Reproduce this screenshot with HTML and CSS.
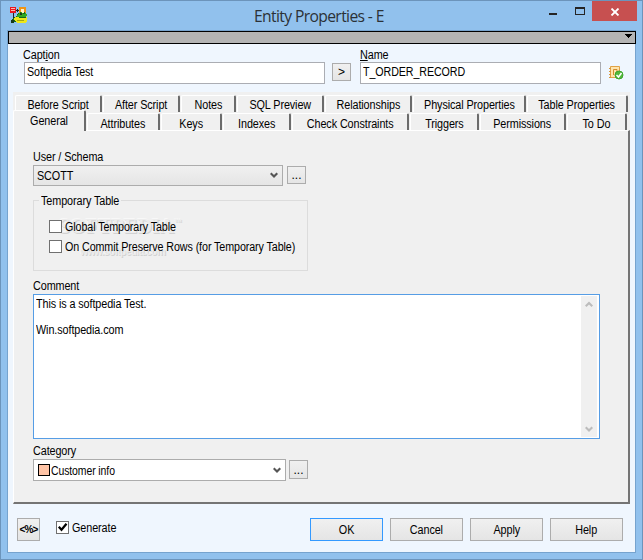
FILE: index.html
```
<!DOCTYPE html>
<html lang="en">
<head>
<meta charset="utf-8">
<title>Entity Properties - E</title>
<link rel="stylesheet" href="styles.css">
</head>
<body>
<div class="window">
  <header class="titlebar">
    <svg class="app-icon" width="17" height="17" viewBox="0 0 17 17" shape-rendering="crispEdges">
      <path d="M9 0h7v7H9z" fill="#ef9414"/><path d="M11 2h3v4h-3z" fill="#fff0c8"/>
      <path d="M0 0h6v6H0z" fill="#e81820"/><path d="M1 1h4v1H1zM1 3h4v1H1z" fill="#ffb8b0"/>
      <path d="M6 3h3v1H6zM7 2h1v3H7zM3 6h1v7H3z" fill="#222"/>
      <path d="M2 12l3-2 2-1 1-3 3-1 2 1 2-1 1 3 1 3-1 4H4z" fill="#126b18"/>
      <path d="M6 9l3-3 3-1 1 2 3-1 1 2-2 2H7z" fill="#32a821"/>
      <path d="M5 10h3l1 1h5l3-1v4l-2 2H7l-3-3z" fill="#eee71c"/>
      <path d="M7 13h7v1H7z" fill="#a3a514"/>
      <path d="M10 6h2v2h-2zM1 13h3v3H1z" fill="#17391a"/>
    </svg>
    <h1 class="title">Entity Properties - E</h1>
    <div class="controls">
      <svg width="68" height="20" viewBox="0 0 68 20" shape-rendering="crispEdges"><path d="M24 12h8v2h-8z" fill="#252525"/><path d="M50 6h10v8H50z" fill="#252525"/><path d="M51 8h8v5h-8z" fill="#91c1ed"/></svg>
      <div class="close"><svg width="10" height="8" viewBox="0 0 10 8"><path d="M1.500.5l7 7M8.500.5l-7 7" stroke="#fff" stroke-width="1.800"/></svg></div>
    </div>
  </header>
  <main class="client">
    <div class="strip"><svg width="7" height="4" viewBox="0 0 7 4" shape-rendering="crispEdges"><path d="M0 0h7v1H6v1H5v1H4v1H3V3H2V2H1V1H0z"/></svg></div>
    <section class="identity">
      <div class="field caption-field"><div class="label"><span>Capt<u>i</u>on</span></div><div class="input"><span>Softpedia Test</span></div></div>
      <div class="btn small arrow">&gt;</div>
      <div class="field name-field"><div class="label"><span><u>N</u>ame</span></div><div class="input"><span>T_ORDER_RECORD</span></div></div>
      <svg class="check-icon" width="16" height="16" viewBox="0 0 16 16">
        <path d="M2.500 1.500h9v11h-9z" fill="#ffe5ad" stroke="#e0a246"/>
        <path d="M1 3.500h2M1 6.500h2M1 9.500h2M1 12.500h2" stroke="#d99636"/>
        <path d="M5.500 10V4.500h3.500v3" stroke="#cf8b2e" fill="none"/>
        <circle cx="11" cy="10" r="4" fill="#53b83b" stroke="#3da52e"/>
        <path d="M8.500 10l2 2 3-4" stroke="#fff" stroke-width="1.500" fill="none"/>
      </svg>
    </section>
    <section class="notebook">
      <div class="tabs tabs-back">
        <div class="tab b1"><span>Before Script</span></div><div class="tab b2"><span>After Script</span></div><div class="tab b3"><span>Notes</span></div><div class="tab b4"><span>SQL Preview</span></div><div class="tab b5"><span>Relationships</span></div><div class="tab b6"><span>Physical Properties</span></div><div class="tab b7"><span>Table Properties</span></div>
      </div>
      <div class="tabs tabs-front">
        <div class="tab active"><span>General</span></div><div class="tab f2"><span>Attributes</span></div><div class="tab f3"><span>Keys</span></div><div class="tab f4"><span>Indexes</span></div><div class="tab f5"><span>Check Constraints</span></div><div class="tab f6"><span>Triggers</span></div><div class="tab f7"><span>Permissions</span></div><div class="tab f8"><span>To Do</span></div>
      </div>
      <div class="panel">
        <div class="label"><span>User / Schema</span></div>
        <div class="row">
          <div class="combo schema"><span>SCOTT</span><svg width="8" height="7" viewBox="0 0 8 7"><path d="M.7 1.200L4 4.500l3.300-3.300" fill="none" stroke="#555" stroke-width="2.200"/></svg></div>
          <div class="btn small dots">...</div>
        </div>
        <div class="group">
          <div class="legend"><span>Temporary Table</span></div>
          <div class="mark">SOFTPEDIA<sup>™</sup></div><div class="mark-url">www.softpedia.com</div>
          <div class="option"><i class="box"></i><span>Global Temporary Table</span></div>
          <div class="option"><i class="box"></i><span>On Commit Preserve Rows (for Temporary Table)</span></div>
        </div>
        <div class="label comment-label"><span>Comment</span></div>
        <div class="memo">
          <div class="memo-text"><span>This is a softpedia Test.<br><br>Win.softpedia.com</span></div>
          <div class="scroll">
            <svg width="8" height="7" viewBox="0 0 8 7"><path d="M.7 5.300L4 2l3.300 3.300" fill="none" stroke="#bcbcbc" stroke-width="2.200"/></svg>
            <svg width="8" height="7" viewBox="0 0 8 7"><path d="M.7 1.200L4 4.500l3.300-3.300" fill="none" stroke="#bcbcbc" stroke-width="2.200"/></svg>
          </div>
        </div>
        <div class="label category-label"><span>Category</span></div>
        <div class="row category-row">
          <div class="combo category"><i class="swatch"></i><span>Customer info</span><svg width="8" height="7" viewBox="0 0 8 7"><path d="M.7 1.200L4 4.500l3.300-3.300" fill="none" stroke="#555" stroke-width="2.200"/></svg></div>
          <div class="btn small dots">...</div>
        </div>
      </div>
    </section>
    <footer class="footer">
      <div class="btn script">&lt;%&gt;</div>
      <div class="option generate"><i class="box"><svg width="11" height="11" viewBox="0 0 11 11"><path d="M1.800 4.800l2.700 3 5-6" fill="none" stroke="#000" stroke-width="2.200"/></svg></i><span>Generate</span></div>
      <div class="actions"><div class="btn ok"><span>OK</span></div><div class="btn"><span>Cancel</span></div><div class="btn"><span>Apply</span></div><div class="btn"><span>Help</span></div></div>
    </footer>
  </main>
</div>
</body>
</html>
```
FILE: styles.css
```
* { box-sizing: border-box; }
body { margin: 0; font: 12px/14px "Liberation Sans", Arial, sans-serif; letter-spacing: -.1px; color: #000; }
svg { display: block; flex: none; }
i { font-style: normal; }
span { display: inline-block; transform: scaleX(.9); transform-origin: left center; white-space: nowrap; }
.tab span, .btn span { transform-origin: center; }
.window { width: 643px; height: 560px; overflow: hidden; background: #91c1ed; border: 1px solid #6c94bb; padding: 0 6px 6px; }
.titlebar { height: 29px; display: flex; position: relative; }
.app-icon { margin: 6px 0 0 3px; }
.title { position: absolute; left: 247px; top: 3px; margin: 0; font: 16px/24px "Open Sans", sans-serif; letter-spacing: -.64px; color: #2b3137; white-space: nowrap; transform: scaleX(.978); transform-origin: left center; }
.controls { display: flex; height: 20px; margin: 0 -1px 0 auto; }
.controls > svg { margin-right: -1px; }
.close { width: 45px; height: 20px; background: #c75050; display: grid; place-items: center; padding-top: 1px; }
.client { height: 523px; border: 1px solid #76a3ce; background: #eff6fe; display: flex; flex-direction: column; }
.strip { height: 13px; margin-right: -1px; flex: none; border: 1px solid #000; background: #b4b4b4; display: flex; justify-content: flex-end; padding: 2px 3px; }
.identity { display: flex; height: 48px; flex: none; padding: 4px 0 0 16px; }
.label { display: block; height: 14px; white-space: nowrap; }
.field .label { position: relative; left: -1px; }
.name-field .label { left: 0; }
.input { height: 22px; border: 1px solid #abadb3; background: #fff; padding: 2px; white-space: nowrap; }
.input span { transform: scaleX(.89); }
.caption-field { width: 301px; }
.name-field { width: 241px; }
u { text-underline-offset: 1px; text-decoration-thickness: 1px; }
.btn { border: 1px solid #acacac; background: linear-gradient(#f0f0f0, #e5e5e5); display: flex; align-items: center; justify-content: center; width: 73px; height: 23px; }
.btn.small { width: 19px; height: 18px; }
.btn.arrow { width: 19px; margin: 15px 9px 0 7px; }
.check-icon { margin: 17px 0 0 7px; }
.notebook { width: 617px; height: 412px; margin-left: 5px; flex: none; background: #f0f0f0; display: flex; flex-direction: column; }
.tabs { display: flex; flex: none; }
.tabs-back { height: 18px; padding: 3px 0 0 2px; }
.tabs-front { height: 20px; z-index: 1; }
.tab { border-top: 1px solid #fff; border-left: 1px solid #fff; border-right: 2px solid #6b6b6b; border-radius: 2px 2px 0 0; background: #f0f0f0; margin-right: 1px; display: flex; justify-content: center; white-space: nowrap; line-height: 14px; flex: none; }
.tabs-back .tab { height: 17px; padding-top: 2px; }
.tabs-front .tab { height: 17px; margin-top: 3px; padding-top: 2px; }
.tabs-front .tab.active { width: 73px; height: 21px; margin: 0 1px 0 0; padding: 3px 0 0; }
.b1 { width: 87px; } .b2 { width: 77px; } .b3 { width: 55px; } .b4 { width: 87px; } .b5 { width: 87px; } .b6 { width: 113px; } .b7 { width: 101px; }
.f2 { width: 73px; } .f3 { width: 61px; } .f4 { width: 68px; } .f5 { width: 117px; } .f6 { width: 69px; } .f7 { width: 86px; } .f8 { width: 60px; }
.panel { flex: 1; min-height: 0; border: 1px solid #fff; border-right: 2px solid #747474; border-bottom: 2px solid #747474; padding: 20px 0 0 19px; }
.panel .label { position: relative; top: -1px; }
.row { display: flex; }
.combo { border: 1px solid #acacac; display: flex; align-items: center; padding: 0 4px 0 3px; }
.combo svg { margin-left: auto; }
.schema { width: 250px; height: 21px; background: linear-gradient(#f0f0f0, #e5e5e5); }
.row .small { margin: 1px 0 0 4px; padding-bottom: 0; letter-spacing: 0; }
.group { position: relative; width: 275px; height: 71px; margin-top: 14px; border: 1px solid #dcdcdc; padding: 19px 0 0 15px; }
.legend { position: absolute; left: 5px; top: -7px; width: 82px; height: 14px; padding: 0 2px; background: #f0f0f0; }
.mark, .mark-url { position: absolute; white-space: nowrap; color: #ececec; text-shadow: 1px 1px #d2d2d2, -1px -1px #f8f8f8; }
.mark { left: 25px; top: 14px; font: bold 20px/22px "Liberation Serif", serif; letter-spacing: .1px; }
.mark sup { font-size: 7px; line-height: 0; vertical-align: 9px; }
.mark-url { left: 46px; top: 45px; font: bold 10px/12px "Liberation Sans", sans-serif; letter-spacing: -.5px; }
.option { display: flex; align-items: center; height: 13px; margin-bottom: 7px; position: relative; white-space: nowrap; gap: 3px; }
.box { width: 13px; height: 13px; border: 1px solid #707070; background: #fff; flex: none; }
.comment-label { margin-top: 9px; }
.memo { width: 567px; height: 145px; border: 1px solid #569de5; background: #fff; display: flex; justify-content: space-between; padding: 1px; }
.memo-text { padding: 2px 1px; line-height: 13px; }
.scroll { width: 16px; background: #f0f0f0; margin-right: 1px; display: flex; flex-direction: column; justify-content: space-between; align-items: center; padding: 5px 0 4px; }
.category-label { margin-top: 6px; }
.category { width: 253px; height: 22px; background: #fff; padding-left: 4px; }
.category span { position: relative; top: 1px; transform: scaleX(.87); }
.category svg, .schema svg { margin-right: 0; }
.swatch { width: 12px; height: 12px; border: 1px solid #000; background: #ffc4a6; margin-right: 1px; }
.category-row .small { margin-left: 3px; height: 19px; }
.footer { display: flex; padding: 14px 0 0 9px; }
.script { width: 23px; font-size: 10px; font-weight: bold; letter-spacing: -.8px; }
.generate { margin: 3px 0 0 16px; }
.actions { display: flex; gap: 7px; margin-left: auto; margin-right: 12px; }
.ok { border-color: #3399ff; }
.tabs-front .tab:not(.active) span { position: relative; top: 1px; }
.group .option span { transform: scaleX(.893); }
```
